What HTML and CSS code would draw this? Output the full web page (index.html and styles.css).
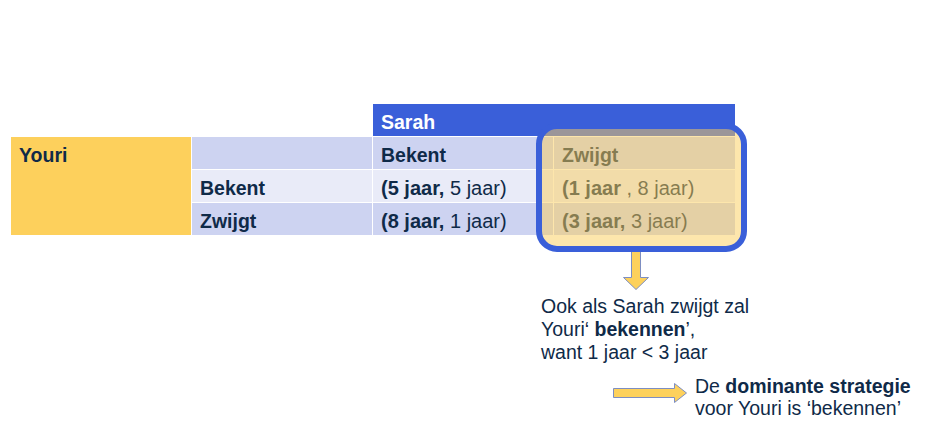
FILE: index.html
```html
<!DOCTYPE html>
<html lang="nl">
<head>
<meta charset="utf-8">
<title>Dominante strategie</title>
<link rel="stylesheet" href="styles.css">
</head>
<body>
<div class="slide">
  <div class="payoff">
    <div class="cell blank"></div>
    <div class="cell blank"></div>
    <div class="cell head">Sarah</div>
    <div class="cell player">Youri</div>
    <div class="cell lav"></div>
    <div class="cell lav b">Bekent</div>
    <div class="cell lav b">Zwijgt</div>
    <div class="cell light b">Bekent</div>
    <div class="cell light data"><b>(5 jaar,</b> 5 jaar)</div>
    <div class="cell light data"><b>(1 jaar</b> , 8 jaar)</div>
    <div class="cell lav b">Zwijgt</div>
    <div class="cell lav data"><b>(8 jaar,</b> 1 jaar)</div>
    <div class="cell lav data"><b>(3 jaar,</b> 3 jaar)</div>
    <div class="highlight"></div>
  </div>

  <svg class="arrow-down" width="30" height="42" viewBox="0 0 30 42">
    <path d="M10.5 0.5 H19.5 V28.5 H27.5 L15 40.5 L2.5 28.5 H10.5 Z" fill="#fdd15c" stroke="#7d8ec2" stroke-width="1"/>
  </svg>

  <p class="note">Ook als Sarah zwijgt zal<br>Youri‘ <b>bekennen</b>’,<br>want 1 jaar &lt; 3 jaar</p>

  <div class="conclusion">
    <svg class="arrow-right" width="76" height="22" viewBox="0 0 76 22">
      <path d="M1.5 6.5 H62.5 V1.5 L74.5 11 L62.5 20.5 V15.5 H1.5 Z" fill="#fdd15c" stroke="#7d8ec2" stroke-width="1"/>
    </svg>
    <p class="conclusion-text">De <b>dominante strategie</b><br>voor Youri is ‘bekennen’</p>
  </div>
</div>
</body>
</html>
```

FILE: styles.css
```css
* { box-sizing: border-box; }

html, body {
  margin: 0;
  padding: 0;
  background: #ffffff;
}

body {
  font-family: "Liberation Sans", Arial, sans-serif;
  color: #0f2a48;
  font-size: 19.5px;
}

.slide {
  width: 932px;
  height: 448px;
  padding: 104px 0 0 11px;
  overflow: hidden;
}

.payoff {
  position: relative;
  display: grid;
  grid-template-columns: 180px 180px 180px 181px;
  grid-template-rows: repeat(4, 32px);
  gap: 1px;
  width: max-content;
}

.cell {
  padding: 6.5px 0 0 8px;
  line-height: 22px;
  white-space: nowrap;
}

.data { font-size: 20px; }

.b { font-weight: bold; }

.blank { background: #ffffff; }

.head {
  grid-column: 3 / span 2;
  background: #3a5fd9;
  color: #ffffff;
  font-weight: bold;
}

.player {
  grid-column: 1;
  grid-row: 2 / span 3;
  background: #fdd05c;
  font-weight: bold;
}

.lav { background: #cdd3f1; }
.light { background: #e9ebf8; }

.highlight {
  position: absolute;
  left: 525px;
  top: 19px;
  width: 211px;
  height: 129px;
  border: 6px solid #3a5fd9;
  border-radius: 21px;
  background: rgba(251, 205, 90, 0.5);
}

.arrow-down {
  display: block;
  margin: 14px 0 0 610px;
}

.note {
  margin: 4px 0 0 530px;
  line-height: 23px;
  white-space: nowrap;
}

.conclusion {
  display: flex;
  align-items: flex-start;
  margin: 11px 0 0 601px;
}

.arrow-right {
  flex: none;
  margin-top: 7px;
  margin-right: 7px;
}

.conclusion-text {
  margin: 0;
  line-height: 22px;
  white-space: nowrap;
}
```
